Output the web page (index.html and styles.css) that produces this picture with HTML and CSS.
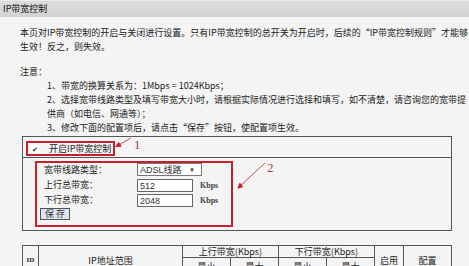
FILE: index.html
```html
<!DOCTYPE html>
<html lang="zh-CN">
<head>
    <meta charset="UTF-8">
    <title>IP带宽控制</title>
    <link rel="stylesheet" href="styles.css">
</head>
<body>
    <div class="title-bar">IP带宽控制</div>

    <div class="content">
        <p class="intro">本页对IP带宽控制的开启与关闭进行设置。只有IP带宽控制的总开关为开启时，后续的“IP带宽控制规则”才能够<br>生效！反之，则失效。</p>

        <p class="notice-title">注意：</p>
        <div class="notes">
            <div>1、带宽的换算关系为：1Mbps = 1024Kbps；</div>
            <div>2、选择宽带线路类型及填写带宽大小时，请根据实际情况进行选择和填写，如不清楚，请咨询您的宽带提</div>
            <div>供商（如电信、网通等）；</div>
            <div>3、修改下面的配置项后，请点击“保存”按钮，使配置项生效。</div>
        </div>

        <div class="panel">
            <div class="panel-top">
                <label class="enable-box">
                    <span class="check">✔</span>
                    <span class="enable-text">开启IP带宽控制</span>
                </label>
            </div>
            <div class="panel-body">
                <div class="settings">
                    <div class="form-grid">
                        <span class="label">宽带线路类型：</span>
                        <span class="select">ADSL线路<span class="caret">▼</span></span>
                        <span></span>

                        <span class="label">上行总带宽：</span>
                        <span class="field">512</span>
                        <span class="unit">Kbps</span>

                        <span class="label">下行总带宽：</span>
                        <span class="field">2048</span>
                        <span class="unit">Kbps</span>
                    </div>
                    <button class="save-btn">保 存</button>
                </div>
            </div>
        </div>

        <table class="rules">
            <tr>
                <th rowspan="2" class="col-id">ID</th>
                <th rowspan="2" class="col-ip">IP地址范围</th>
                <th colspan="2" class="col-up">上行带宽(Kbps)</th>
                <th colspan="2" class="col-down">下行带宽(Kbps)</th>
                <th rowspan="2" class="col-on">启用</th>
                <th rowspan="2" class="col-cfg">配置</th>
            </tr>
            <tr>
                <th class="sub-a">最小</th>
                <th class="sub-b">最大</th>
                <th class="sub-c">最小</th>
                <th class="sub-d">最大</th>
            </tr>
        </table>
    </div>

    <svg class="marks" width="469" height="266" viewBox="0 0 469 266">
        <defs>
            <marker id="head" markerWidth="6" markerHeight="6" refX="5" refY="3" orient="auto">
                <path d="M0,0 L6,3 L0,6 Z" fill="#c8202a"/>
            </marker>
        </defs>
        <line x1="131" y1="138" x2="116" y2="146.5" stroke="#c8505a" stroke-width="1" marker-end="url(#head)"/>
        <line x1="265" y1="163" x2="238" y2="188" stroke="#c8505a" stroke-width="1" marker-end="url(#head)"/>
        <text x="134" y="149" class="num">1</text>
        <text x="267" y="172" class="num">2</text>
    </svg>
</body>
</html>
```

FILE: styles.css
```css
body {
    margin: 0;
    background-color: #f4f4f4;
    font-family: "Noto Sans CJK SC", "Liberation Sans", sans-serif;
    font-size: 9px;
    color: #222;
    width: 469px;
    height: 266px;
    overflow: hidden;
    position: relative;
}

.title-bar {
    height: 16px;
    line-height: 16px;
    padding-left: 3px;
    background: linear-gradient(#dcdcdc, #d2d2d2);
    border-top: 1px solid #ececec;
    color: #111;
}

.content {
    padding: 0 0 0 20px;
}

p {
    margin: 0;
}

.intro {
    margin-top: 9px;
    line-height: 14px;
}

.notice-title {
    margin-top: 11px;
    line-height: 14px;
}

.notes {
    padding-left: 27px;
    line-height: 14px;
}

.panel {
    margin: 1px 0 0 2px;
    width: 428px;
    border: 1px solid #555;
}

.panel-top {
    height: 21px;
    border-bottom: 1px solid #555;
    padding: 4px 0 0 3px;
    box-sizing: border-box;
}

.enable-box {
    display: flex;
    align-items: center;
    width: 85px;
    height: 11px;
    border: 2px solid #c8202a;
    white-space: nowrap;
    overflow: hidden;
}

.check {
    flex: none;
    width: 8px;
    height: 8px;
    margin-left: 3px;
    background: #fff;
    font-size: 7px;
    line-height: 8px;
    text-align: center;
    color: #222;
}

.enable-text {
    line-height: 11px;
    margin-left: 10px;
}

.panel-body {
    padding: 3px 0 3px 12px;
}

.settings {
    width: 194px;
    height: 62px;
    border: 2px solid #c8202a;
}

.form-grid {
    display: grid;
    grid-template-columns: 93px 63px 30px;
    grid-auto-rows: 15px;
    align-items: start;
    padding-left: 7px;
}

.label {
    line-height: 14px;
}

.select,
.field {
    display: flex;
    align-items: center;
    height: 11px;
    background: #fff;
    border: 1px solid #777;
    font-family: "Liberation Sans", sans-serif;
    font-size: 9px;
    padding-left: 2px;
    color: #333;
}

.select {
    width: 61px;
    font-family: "Liberation Sans", "Noto Sans CJK SC", sans-serif;
}

.caret {
    margin-left: auto;
    margin-right: 6px;
    font-size: 6px;
}

.field {
    width: 52px;
    border-color: #666;
    margin-top: 1px;
}

.unit {
    font-family: "Liberation Serif", serif;
    font-size: 8px;
    font-weight: bold;
    color: #444;
    line-height: 15px;
}

.save-btn {
    display: block;
    margin: 0 0 0 3px;
    padding: 0;
    width: 30px;
    height: 12px;
    line-height: 10px;
    font-family: "Noto Sans CJK SC", sans-serif;
    font-size: 9px;
    color: #333;
    background: #dbe6f2;
    border: 1px solid #555;
    border-radius: 0;
}

.rules {
    margin: 14px 0 0 2px;
    width: 430px;
    border-collapse: collapse;
    table-layout: fixed;
}

.rules th {
    border: 1px solid #555;
    font-weight: normal;
    font-size: 9px;
    padding: 0;
    height: 11px;
    line-height: 11px;
    color: #222;
}

.rules .col-id {
    width: 15px;
    font-family: "Liberation Serif", serif;
    font-size: 7px;
    font-weight: bold;
    vertical-align: middle;
    height: 28px;
}

.rules .col-ip {
    width: 143px;
}

.rules .col-on {
    width: 28px;
}

.rules .sub-a,
.rules .sub-b,
.rules .sub-c,
.rules .sub-d {
    height: 17px;
}

.rules .sub-a {
    width: 45px;
}

.rules .sub-b {
    width: 44px;
}

.rules .sub-c {
    width: 44px;
}

.rules .sub-d {
    width: 45px;
}

.marks {
    position: absolute;
    left: 0;
    top: 0;
    pointer-events: none;
}

.num {
    font-family: "Liberation Serif", serif;
    font-size: 13px;
    fill: #b0404a;
}
```
